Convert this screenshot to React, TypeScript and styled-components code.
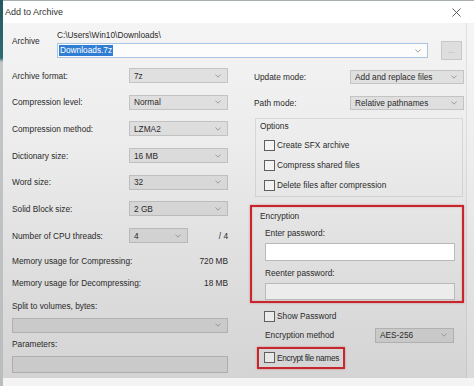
import React from "react";
import styled, { createGlobalStyle } from "styled-components";

const GlobalStyle = createGlobalStyle`
  html, body {
    margin: 0;
    padding: 0;
  }
  body {
    width: 474px;
    height: 386px;
    overflow: hidden;
    background: #f3f3f3;
    font-family: "Liberation Sans", Arial, sans-serif;
    font-size: 8.3px;
    color: #2a2a2a;
  }
`;

const leftFields = [
  { label: "Archive format:", value: "7z" },
  { label: "Compression level:", value: "Normal" },
  { label: "Compression method:", value: "LZMA2" },
  { label: "Dictionary size:", value: "16 MB" },
  { label: "Word size:", value: "32" },
  { label: "Solid Block size:", value: "2 GB" },
];

const Chevron = () => (
  <svg width="6" height="4" viewBox="0 0 6 4">
    <polyline points="0.5,0.5 3,3.2 5.5,0.5" fill="none" stroke="#959595" strokeWidth="0.9" />
  </svg>
);

const Select = ({ value, width, height }: { value?: string; width: number; height?: number }) => (
  <SelectBox $w={width} $h={height}>
    <span>{value}</span>
    <Chevron />
  </SelectBox>
);

const Check = ({ label }: { label: string }) => (
  <CheckRow>
    <CheckBox />
    <span>{label}</span>
  </CheckRow>
);

const App = () => {
  return (
    <>
      <GlobalStyle />
      <Screen>
        <OuterEdge />
        <Window>
          <TitleBar>
            <span>Add to Archive</span>
            <svg width="9" height="9" viewBox="0 0 9 9">
              <path d="M0.5 0.5 L8.5 8.5 M8.5 0.5 L0.5 8.5" stroke="#4a4a4a" strokeWidth="0.9" />
            </svg>
          </TitleBar>
          <Frame>
            <Body>
              <ArchiveRow>
                <ArchiveLabel>Archive</ArchiveLabel>
                <ArchiveFields>
                  <PathText>C:\Users\Win10\Downloads\</PathText>
                  <ArchiveCombo>
                    <Selected>Downloads.7z</Selected>
                    <Chevron />
                  </ArchiveCombo>
                </ArchiveFields>
                <BrowseButton>...</BrowseButton>
              </ArchiveRow>

              <Columns>
                <LeftColumn>
                  <FieldList>
                    {leftFields.map((f) => (
                      <FieldRow key={f.label}>
                        <FieldLabel>{f.label}</FieldLabel>
                        <Select value={f.value} width={99} />
                      </FieldRow>
                    ))}
                    <FieldRow>
                      <FieldLabel>Number of CPU threads:</FieldLabel>
                      <Select value="4" width={59} />
                      <Trailing>/ 4</Trailing>
                    </FieldRow>
                  </FieldList>
                  <MemoryList>
                    <MemoryRow>
                      <span>Memory usage for Compressing:</span>
                      <span>720 MB</span>
                    </MemoryRow>
                    <MemoryRow>
                      <span>Memory usage for Decompressing:</span>
                      <span>18 MB</span>
                    </MemoryRow>
                  </MemoryList>
                  <StackLabel $top={12}>Split to volumes, bytes:</StackLabel>
                  <StackField $top={5.5}>
                    <Select width={216} />
                  </StackField>
                  <StackLabel $top={6.5}>Parameters:</StackLabel>
                  <StackField $top={5.5}>
                    <TextInput $w={216} $h={17} $tone="gray" />
                  </StackField>
                </LeftColumn>

                <RightColumn>
                  <ModeRow $top={2}>
                    <span>Update mode:</span>
                    <Select value="Add and replace files" width={114} height={14} />
                  </ModeRow>
                  <ModeRow $top={12}>
                    <span>Path mode:</span>
                    <Select value="Relative pathnames" width={114} height={14} />
                  </ModeRow>

                  <OptionsGroup>
                    <GroupTitle>Options</GroupTitle>
                    <CheckList>
                      <Check label="Create SFX archive" />
                      <Check label="Compress shared files" />
                      <Check label="Delete files after compression" />
                    </CheckList>
                  </OptionsGroup>

                  <EncryptionGroup>
                    <GroupTitle>Encryption</GroupTitle>
                    <PasswordBlock>
                      <PasswordLabel $top={0}>Enter password:</PasswordLabel>
                      <TextInput $w={190} $h={18} $tone="white" />
                      <PasswordLabel $top={2}>Reenter password:</PasswordLabel>
                      <TextInput $w={190} $h={17} $tone="light" />
                    </PasswordBlock>
                  </EncryptionGroup>

                  <ShowPassword>
                    <Check label="Show Password" />
                  </ShowPassword>
                  <MethodRow>
                    <span>Encryption method</span>
                    <Select value="AES-256" width={79} />
                  </MethodRow>
                  <HighlightCheck>
                    <Check label="Encrypt file names" />
                  </HighlightCheck>
                </RightColumn>
              </Columns>
            </Body>
            <InnerEdge />
          </Frame>
        </Window>
      </Screen>
    </>
  );
};

export default App;

const Screen = styled.div`
  display: flex;
  width: 474px;
  height: 386px;
  background: #f4f4f4;
`;

const OuterEdge = styled.div`
  flex: none;
  width: 3px;
  background: linear-gradient(#23585e 0, #2e6c72 58px, #c3c7c7 62px, #b9bdbd 100%);
`;

const Window = styled.div`
  flex: 1;
  display: flex;
  flex-direction: column;
`;

const TitleBar = styled.div`
  flex: none;
  height: 22px;
  display: flex;
  align-items: center;
  justify-content: space-between;
  padding: 0 13px 0 2px;
  background: #ffffff;
  border-top: 1px solid #a7aeae;
  font-size: 9px;
  color: #333;
`;

const Frame = styled.div`
  flex: none;
  height: 355px;
  display: flex;
  background: linear-gradient(#f4f4f4, #ececec 35%, #dedede 70%, #d4d4d4);
`;

const Body = styled.div`
  flex: 1;
  padding: 0 2px 0 9px;
`;

const InnerEdge = styled.div`
  flex: none;
  width: 7px;
  border-left: 1px solid rgba(0, 0, 0, 0.08);
  background: rgba(255, 255, 255, 0.15);
`;

const ArchiveRow = styled.div`
  display: flex;
  align-items: flex-start;
  padding-top: 7px;
`;

const ArchiveLabel = styled.span`
  width: 45px;
  margin-top: 6px;
`;

const ArchiveFields = styled.div`
  display: flex;
  flex-direction: column;
  gap: 2px;
`;

const PathText = styled.span`
  height: 11px;
  line-height: 11px;
`;

const ArchiveCombo = styled.div`
  box-sizing: border-box;
  width: 371px;
  height: 15px;
  display: flex;
  align-items: center;
  justify-content: space-between;
  padding: 0 6px 0 1px;
  background: #fcfcfc;
  border: 1px solid #a9c5e2;
`;

const Selected = styled.span`
  background: #2f7ed4;
  color: #ffffff;
  padding: 0 1px;
  line-height: 11px;
`;

const BrowseButton = styled.div`
  box-sizing: border-box;
  width: 21px;
  height: 19px;
  margin: 11px 0 0 13px;
  display: flex;
  align-items: center;
  justify-content: center;
  background: #dedede;
  border: 1px solid #c8c8c8;
  color: #a0a0a0;
  font-size: 7px;
`;

const Columns = styled.div`
  display: flex;
  margin-top: 8px;
`;

const LeftColumn = styled.div`
  width: 216px;
  display: flex;
  flex-direction: column;
`;

const FieldList = styled.div`
  display: flex;
  flex-direction: column;
  gap: 11.7px;
`;

const FieldRow = styled.div`
  display: flex;
  align-items: center;
  height: 15px;
`;

const FieldLabel = styled.span`
  width: 117px;
`;

const Trailing = styled.span`
  margin-left: auto;
`;

const SelectBox = styled.div<{ $w: number; $h?: number }>`
  box-sizing: border-box;
  width: ${(p) => p.$w}px;
  height: ${(p) => p.$h ?? 15}px;
  display: flex;
  align-items: center;
  justify-content: space-between;
  padding: 0 6px 0 4px;
  background: rgba(0, 0, 0, 0.065);
  border: 1px solid rgba(0, 0, 0, 0.12);
`;

const MemoryList = styled.div`
  display: flex;
  flex-direction: column;
  gap: 11px;
  margin-top: 13.3px;
`;

const MemoryRow = styled.div`
  display: flex;
  justify-content: space-between;
  height: 11px;
  line-height: 11px;
`;

const StackLabel = styled.span<{ $top: number }>`
  display: block;
  height: 11px;
  line-height: 11px;
  margin-top: ${(p) => p.$top}px;
`;

const StackField = styled.div<{ $top: number }>`
  margin-top: ${(p) => p.$top}px;
`;

const TextInput = styled.div<{ $w: number; $h: number; $tone: "white" | "light" | "gray" }>`
  box-sizing: border-box;
  width: ${(p) => p.$w}px;
  height: ${(p) => p.$h}px;
  border: 1px solid ${(p) => (p.$tone === "gray" ? "rgba(0,0,0,0.14)" : "#b9b9b9")};
  background: ${(p) =>
    p.$tone === "white" ? "#ffffff" : p.$tone === "light" ? "#ececec" : "rgba(0,0,0,0.05)"};
`;

const RightColumn = styled.div`
  width: 214px;
  margin-left: 22px;
  display: flex;
  flex-direction: column;
`;

const ModeRow = styled.div<{ $top: number }>`
  display: flex;
  align-items: center;
  justify-content: space-between;
  padding-left: 4px;
  margin-top: ${(p) => p.$top}px;
`;

const OptionsGroup = styled.div`
  box-sizing: border-box;
  width: 208px;
  height: 79px;
  margin: 8px 0 0 5px;
  padding: 2px 0 0 4px;
  border: 1px solid rgba(0, 0, 0, 0.09);
`;

const GroupTitle = styled.div`
  height: 10px;
  line-height: 10px;
`;

const CheckList = styled.div`
  display: flex;
  flex-direction: column;
  gap: 9px;
  margin: 8.5px 0 0 4px;
`;

const CheckRow = styled.div`
  display: flex;
  align-items: center;
  gap: 2px;
  height: 11px;
  white-space: nowrap;
`;

const CheckBox = styled.span`
  flex: none;
  box-sizing: border-box;
  width: 11px;
  height: 11px;
  border: 1px solid #5f5f5f;
  background: rgba(255, 255, 255, 0.45);
`;

const EncryptionGroup = styled.div`
  box-sizing: border-box;
  width: 214px;
  height: 98px;
  margin-top: 8px;
  padding: 4px 0 0 8px;
  border: 2px solid #c6262e;
  box-shadow: 0 0 2px rgba(200, 40, 40, 0.45), inset 0 0 2px rgba(200, 40, 40, 0.35);
`;

const PasswordBlock = styled.div`
  display: flex;
  flex-direction: column;
  align-items: flex-start;
  gap: 5px;
  margin: 7px 0 0 5px;
`;

const PasswordLabel = styled.span<{ $top: number }>`
  height: 10px;
  line-height: 10px;
  margin-top: ${(p) => p.$top}px;
`;

const ShowPassword = styled.div`
  margin: 7.5px 0 0 14px;
`;

const MethodRow = styled.div`
  display: flex;
  align-items: center;
  justify-content: space-between;
  margin: 6px 10px 0 15px;
`;

const HighlightCheck = styled.div`
  box-sizing: border-box;
  width: 88px;
  height: 22px;
  margin: 4px 0 0 7px;
  padding-left: 5px;
  display: flex;
  align-items: center;
  letter-spacing: -0.35px;
  border: 2px solid #c6262e;
  box-shadow: 0 0 2px rgba(200, 40, 40, 0.45);
`;
